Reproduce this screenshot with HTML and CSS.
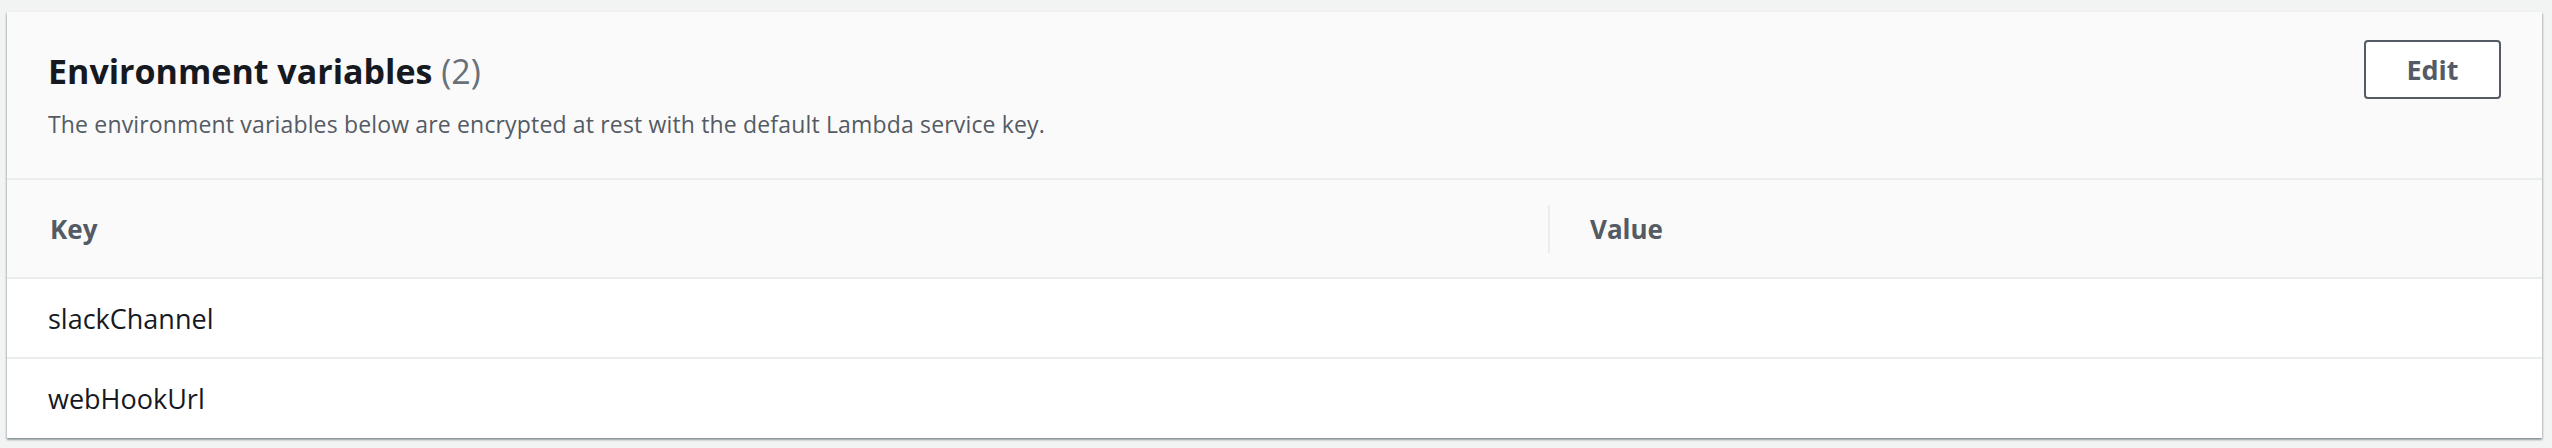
FILE: index.html
```html
<!DOCTYPE html>
<html lang="en">
<head>
<meta charset="utf-8">
<title>Environment variables</title>
<link rel="stylesheet" href="styles.css">
</head>
<body>
<section class="card">
  <header class="card-header">
    <div class="heading">
      <h2 class="title">Environment variables <span class="count">(2)</span></h2>
      <p class="desc">The environment variables below are encrypted at rest with the default Lambda service key.</p>
    </div>
    <button class="btn" type="button">Edit</button>
  </header>
  <table class="table">
    <thead>
      <tr>
        <th class="col-key"><span class="th-inner">Key</span></th>
        <th class="col-value"><span class="th-inner">Value</span></th>
      </tr>
    </thead>
    <tbody>
      <tr><td>slackChannel</td><td></td></tr>
      <tr><td>webHookUrl</td><td></td></tr>
    </tbody>
  </table>
</section>
</body>
</html>
```
FILE: styles.css
```css
html, body {
  margin: 0;
  padding: 0;
}
body {
  background: #f2f3f3;
  font-family: "Open Sans", "Noto Sans", sans-serif;
  color: #16191f;
  width: 2552px;
  height: 448px;
  overflow: hidden;
}
.card {
  margin: 12px 10px 0 7px;
  background: #ffffff;
  box-shadow: 0 2px 2px 0 rgba(0, 28, 36, 0.3), 1px 1px 2px 0 rgba(0, 28, 36, 0.15), -1px 1px 2px 0 rgba(0, 28, 36, 0.15);
}
.card-header {
  background: #fafafa;
  display: flex;
  justify-content: space-between;
  align-items: flex-start;
  padding: 37px 41px 39px 41px;
  border-bottom: 2px solid #eaeded;
}
.title {
  margin: 0;
  font-size: 34px;
  line-height: 44px;
  font-weight: 700;
  color: #16191f;
}
.count {
  font-weight: 400;
  color: #687078;
}
.desc {
  margin: 16px 0 0;
  font-size: 23px;
  line-height: 30px;
  letter-spacing: 0.16px;
  color: #545b64;
}
.btn {
  margin-top: -9px;
  width: 137px;
  height: 59px;
  box-sizing: border-box;
  border: 2px solid #545b64;
  border-radius: 4px;
  background: #ffffff;
  color: #545b64;
  font-family: inherit;
  font-size: 27px;
  font-weight: 700;
  padding: 0;
}
.table {
  width: 100%;
  border-collapse: collapse;
  table-layout: fixed;
}
.table th {
  background: #fafafa;
  color: #545b64;
  font-size: 26px;
  font-weight: 700;
  text-align: left;
  height: 97px;
  padding: 0;
  border-bottom: 2px solid #eaeded;
}
.col-key {
  width: 1541px;
}
.th-inner {
  display: block;
  padding-left: 43px;
}
.col-value .th-inner {
  border-left: 2px solid #eaeded;
  padding-left: 40px;
  line-height: 48px;
}
.table td {
  font-size: 27px;
  height: 78px;
  padding: 0 0 0 41px;
  border-bottom: 2px solid #eaeded;
  color: #16191f;
}
.table tbody tr:last-child td {
  border-bottom: none;
  height: 79px;
}
```
